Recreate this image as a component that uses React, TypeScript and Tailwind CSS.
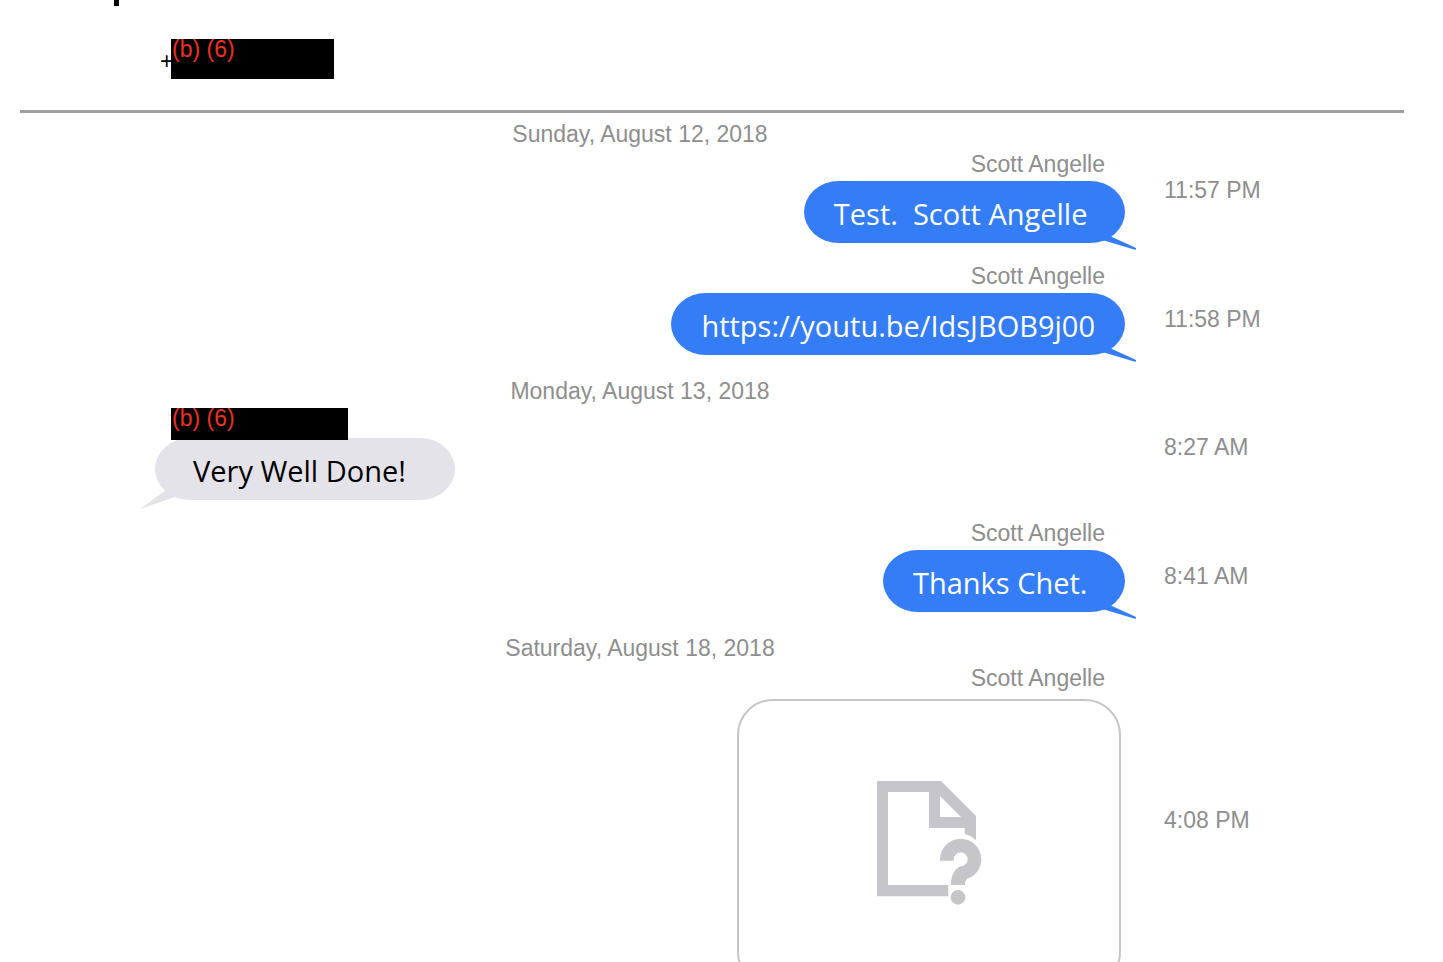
import type { ReactNode } from "react";

function Redaction({ className }: { className: string }) {
  return (
    <span className={`relative block bg-black pl-px text-[23px] leading-5 text-[#ee2f24] ${className}`}>(b) (6)</span>
  );
}

function OutgoingTail() {
  return (
    <svg className="absolute -right-3 -bottom-2 h-5 w-12" viewBox="-12 -6 48 20" aria-hidden="true">
      <path d="M-8 -4H8L11 0L34.5 10.8Q36 12.6 34 12.8L3 3.5L-8 3Z" fill="#347df7" />
    </svg>
  );
}

function IncomingTail() {
  return (
    <svg className="absolute -bottom-[9px] -left-[15px] h-[19px] w-10" viewBox="0 0 40 19" aria-hidden="true">
      <path d="M26 0L0 19L38 6Z" fill="#e4e3e9" />
    </svg>
  );
}

function MissingFileIcon() {
  return (
    <svg className="h-[125px] w-[105px]" viewBox="51 36 315 375" fill="#c6c5ca" role="img" aria-label="Missing attachment">
      <path
        fillRule="evenodd"
        d="M51 36H243L348 141V213Q333 199 314 194V177H207V69H84V348H265V382H51ZM240 81V144H303Z"
      />
      <path d="M240 275V271A62 62 0 0 1 364 271C364 300 345 322 322 329C316 333 315 340 315 348H273C273 325 280 302 302 292A21 21 0 1 0 281 271V275Z" />
      <circle cx="294" cy="385" r="22" />
    </svg>
  );
}

function Outgoing({ children }: { children: ReactNode }) {
  return (
    <div className="flex flex-col items-end">
      <p className="pr-5 text-[23px] leading-[30px] text-[#8e8e8e]">Scott Angelle</p>
      {children}
    </div>
  );
}

function OutgoingBubble({ children }: { children: ReactNode }) {
  return (
    <div className="relative mt-0.5 rounded-[35px/31px] bg-[#347df7] px-[30px] pt-1 font-['Open_Sans',sans-serif] text-[29px] leading-[58px] whitespace-pre text-white">
      {children}
      <OutgoingTail />
    </div>
  );
}

interface RowProps {
  date?: string;
  time: string;
  endOfDay?: boolean;
  children: ReactNode;
}

function Row({ date, time, endOfDay = false, children }: RowProps) {
  return (
    <li className="grid grid-cols-[minmax(0,1fr)_240px] items-center gap-x-[39px] pl-[135px]">
      <div className={endOfDay ? "pb-[21px]" : "pb-[18px]"}>
        {date && <h2 className="text-center text-[23px] leading-[30px] text-[#8e8e8e]">{date}</h2>}
        {children}
      </div>
      <time className="text-[23px] leading-[30px] text-[#8e8e8e]">{time}</time>
    </li>
  );
}

export default function App() {
  return (
    <main className="h-screen overflow-hidden bg-white pr-[39px] pl-5 font-['Liberation_Sans',Arial,sans-serif]">
      <header className="border-b-[3px] border-[#9e9e9e] pb-[27px]">
        <div className="ml-[94px] h-1.5 w-[5px] bg-black" />
        <div className="mt-[33px] flex pl-[140px]">
          <span className="w-[11px] text-[23px] leading-[44px]">+</span>
          <Redaction className="h-10 w-[163px]" />
        </div>
      </header>
      <ol className="pt-1.5">
        <Row date="Sunday, August 12, 2018" time="11:57 PM">
          <Outgoing>
            <OutgoingBubble>{"Test.  Scott Angelle "}</OutgoingBubble>
          </Outgoing>
        </Row>
        <Row time="11:58 PM" endOfDay>
          <Outgoing>
            <OutgoingBubble>https://youtu.be/IdsJBOB9j00</OutgoingBubble>
          </Outgoing>
        </Row>
        <Row date="Monday, August 13, 2018" time="8:27 AM">
          <div className="flex flex-col items-start">
            <Redaction className="z-10 mt-0.5 ml-4 h-8 w-[177px]" />
            <div className="relative -mt-0.5 rounded-[35px/31px] bg-[#e4e3e9] pt-1 pr-[42px] pl-[38px] font-['Open_Sans',sans-serif] text-[29px] leading-[58px] whitespace-pre text-black">
              {"Very Well Done! "}
              <IncomingTail />
            </div>
          </div>
        </Row>
        <Row time="8:41 AM" endOfDay>
          <Outgoing>
            <OutgoingBubble>{"Thanks Chet. "}</OutgoingBubble>
          </Outgoing>
        </Row>
        <Row date="Saturday, August 18, 2018" time="4:08 PM">
          <Outgoing>
            <div className="mt-1.5 mr-1 flex h-[289px] w-96 items-center justify-center rounded-[36px] border-2 border-[#c6c5ca]">
              <MissingFileIcon />
            </div>
          </Outgoing>
        </Row>
      </ol>
    </main>
  );
}
